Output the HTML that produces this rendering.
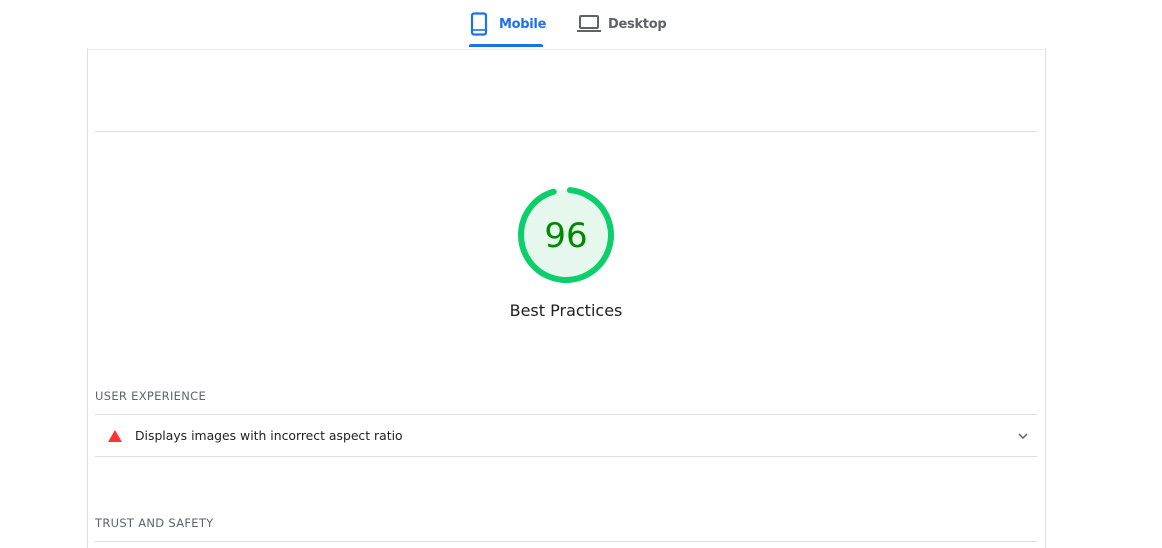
<!DOCTYPE html>
<html><head><style>
html,body{margin:0;padding:0;background:#fff;width:1162px;height:548px;overflow:hidden;font-family:"Liberation Sans",sans-serif;position:relative;}
.tabs{position:absolute;top:0;left:0;width:1162px;height:50px;}
.tab{position:absolute;top:17px;font-family:"DejaVu Sans",sans-serif;font-size:13px;font-weight:bold;letter-spacing:-0.3px;}
.card{position:absolute;left:87px;top:48px;width:957px;height:500px;border-left:1px solid #e0e0e0;border-right:1px solid #e0e0e0;}
.hl{position:absolute;height:1px;background:#e0e0e0;}
.sec{position:absolute;left:95px;font-size:11.5px;letter-spacing:.3px;color:#5f6368;font-family:"DejaVu Sans",sans-serif;}
</style></head><body>
<div class="card"></div>
<div class="hl" style="left:87px;top:49px;width:959px;background:#ebebeb"></div>
<div class="tabs">
  <svg style="position:absolute;left:470px;top:12px" width="18" height="24" viewBox="0 0 18 24"><rect x="2" y="1.5" width="14" height="21" rx="2" fill="none" stroke="#1a73e8" stroke-width="2.2"/><line x1="2" y1="18" x2="16" y2="18" stroke="#1a73e8" stroke-width="1.6"/></svg>
  <div class="tab" style="left:499px;color:#1a73e8">Mobile</div>
  <div style="position:absolute;left:469px;top:44px;width:74px;height:3px;background:#1a73e8;border-radius:2px 2px 0 0"></div>
  <svg style="position:absolute;left:577px;top:14px" width="24" height="20" viewBox="0 0 24 20"><rect x="3" y="2" width="18" height="12" rx="1" fill="none" stroke="#5f6368" stroke-width="2"/><rect x="0" y="16" width="24" height="2" fill="#5f6368"/></svg>
  <div class="tab" style="left:608px;color:#5f6368">Desktop</div>
</div>
<div class="hl" style="left:95px;top:131px;width:942px"></div>
<svg style="position:absolute;left:516px;top:185px" width="100" height="100" viewBox="0 0 100 100">
  <circle cx="50" cy="50" r="45" fill="#e6f8ee"/>
  <circle cx="50" cy="50" r="45" fill="none" stroke="#0cce6b" stroke-width="6" stroke-linecap="round" stroke-dasharray="266 400" transform="rotate(-85 50 50)"/>
  <text x="50" y="62" text-anchor="middle" font-family="DejaVu Sans,sans-serif" font-size="34" fill="#008800">96</text>
</svg>
<div style="position:absolute;left:466px;width:200px;top:301px;text-align:center;font-family:'DejaVu Sans',sans-serif;font-size:16px;color:#212121">Best Practices</div>
<div class="sec" style="top:389px">USER EXPERIENCE</div>
<div class="hl" style="left:95px;top:414px;width:942px"></div>
<svg style="position:absolute;left:108px;top:430px" width="14" height="12" viewBox="0 0 14 12"><polygon points="7,0 14,12 0,12" fill="#f33"/></svg>
<div style="position:absolute;left:135px;top:428px;font-family:'DejaVu Sans',sans-serif;font-size:12.4px;color:#212121">Displays images with incorrect aspect ratio</div>
<svg style="position:absolute;left:1017px;top:431px" width="12" height="10" viewBox="0 0 12 10"><path d="M2 3 L6 7 L10 3" fill="none" stroke="#5f6368" stroke-width="1.5"/></svg>
<div class="hl" style="left:95px;top:456px;width:942px"></div>
<div class="sec" style="top:516px">TRUST AND SAFETY</div>
<div class="hl" style="left:95px;top:541px;width:942px"></div>
</body></html>
